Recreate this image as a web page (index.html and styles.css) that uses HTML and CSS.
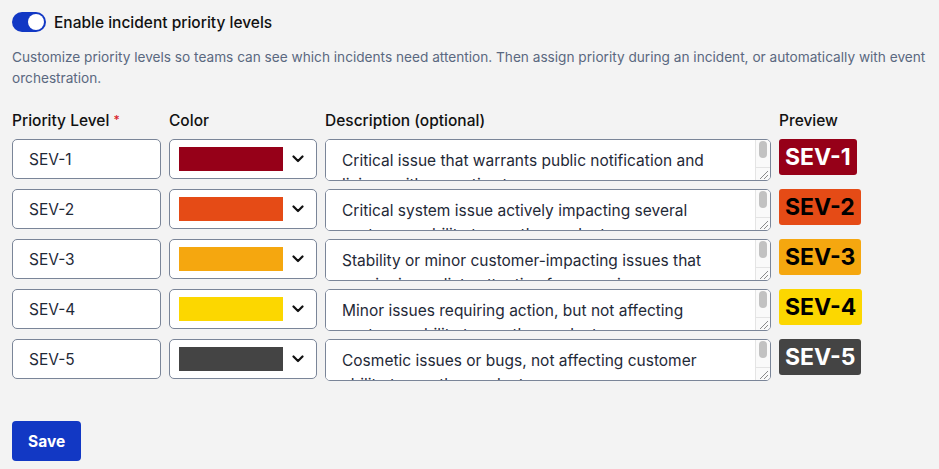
FILE: index.html
```html
<!DOCTYPE html>
<html lang="en">

<head>
    <meta charset="UTF-8">
    <meta name="viewport" content="width=device-width, initial-scale=1.0">
    <title>Incident priority levels</title>
    <link rel="stylesheet" href="styles.css">
</head>

<body>

    <div class="priority">
        <label class="priority__toggle">
            <span class="switch"><span class="switch__knob"></span></span>
            <span class="priority__title">Enable incident priority levels</span>
        </label>
        <p class="priority__help">Customize priority levels so teams can see which incidents need attention. Then assign priority during an incident, or automatically with event orchestration.</p>

        <div class="levels">
            <div class="levels__head">Priority Level <span class="required">*</span></div>
            <div class="levels__head">Color</div>
            <div class="levels__head">Description (optional)</div>
            <div class="levels__head">Preview</div>

            <input class="field" type="text" value="SEV-1">
            <button class="color-select"><span class="swatch swatch--sev1"></span><svg class="chevron" viewBox="0 0 12 8"><path d="M1.5 1.5 6 6l4.5-4.5"/></svg></button>
            <div class="area">
                <textarea class="area__input">Critical issue that warrants public notification and liaison with executive teams</textarea>
                <div class="area__bar"><span class="area__thumb"></span><span class="area__grip"><svg viewBox="0 0 14 12"><path d="M4 11 12 3M8 11l4-4"/></svg></span></div>
            </div>
            <div><span class="badge badge--sev1">SEV-1</span></div>

            <input class="field" type="text" value="SEV-2">
            <button class="color-select"><span class="swatch swatch--sev2"></span><svg class="chevron" viewBox="0 0 12 8"><path d="M1.5 1.5 6 6l4.5-4.5"/></svg></button>
            <div class="area">
                <textarea class="area__input">Critical system issue actively impacting several customers ability to use the product</textarea>
                <div class="area__bar"><span class="area__thumb"></span><span class="area__grip"><svg viewBox="0 0 14 12"><path d="M4 11 12 3M8 11l4-4"/></svg></span></div>
            </div>
            <div><span class="badge badge--sev2">SEV-2</span></div>

            <input class="field" type="text" value="SEV-3">
            <button class="color-select"><span class="swatch swatch--sev3"></span><svg class="chevron" viewBox="0 0 12 8"><path d="M1.5 1.5 6 6l4.5-4.5"/></svg></button>
            <div class="area">
                <textarea class="area__input">Stability or minor customer-impacting issues that require immediate attention from service owners</textarea>
                <div class="area__bar"><span class="area__thumb"></span><span class="area__grip"><svg viewBox="0 0 14 12"><path d="M4 11 12 3M8 11l4-4"/></svg></span></div>
            </div>
            <div><span class="badge badge--sev3">SEV-3</span></div>

            <input class="field" type="text" value="SEV-4">
            <button class="color-select"><span class="swatch swatch--sev4"></span><svg class="chevron" viewBox="0 0 12 8"><path d="M1.5 1.5 6 6l4.5-4.5"/></svg></button>
            <div class="area">
                <textarea class="area__input">Minor issues requiring action, but not affecting customer ability to use the product</textarea>
                <div class="area__bar"><span class="area__thumb"></span><span class="area__grip"><svg viewBox="0 0 14 12"><path d="M4 11 12 3M8 11l4-4"/></svg></span></div>
            </div>
            <div><span class="badge badge--sev4">SEV-4</span></div>

            <input class="field" type="text" value="SEV-5">
            <button class="color-select"><span class="swatch swatch--sev5"></span><svg class="chevron" viewBox="0 0 12 8"><path d="M1.5 1.5 6 6l4.5-4.5"/></svg></button>
            <div class="area">
                <textarea class="area__input">Cosmetic issues or bugs, not affecting customer ability to use the product</textarea>
                <div class="area__bar"><span class="area__thumb"></span><span class="area__grip"><svg viewBox="0 0 14 12"><path d="M4 11 12 3M8 11l4-4"/></svg></span></div>
            </div>
            <div><span class="badge badge--sev5">SEV-5</span></div>
        </div>

        <button class="save">Save</button>
    </div>

</body>

</html>
```

FILE: styles.css
```css
html {
    box-sizing: border-box;
    background: #f3f3f3;
}

*,
*:before,
*:after {
    box-sizing: inherit;
}

body {
    margin: 0;
    font-family: Inter, 'Noto Sans', sans-serif;
    color: #111;
}

.priority {
    padding: 12px 12px 8px;
}

.priority__toggle {
    display: flex;
    align-items: center;
    gap: 8px;
    height: 20px;
}

.switch {
    display: flex;
    justify-content: flex-end;
    align-items: center;
    width: 34px;
    height: 20px;
    padding: 2px;
    border-radius: 10px;
    background: #1238c4;
}

.switch__knob {
    width: 16px;
    height: 16px;
    border-radius: 50%;
    background: white;
}

.priority__title {
    font-size: 15.5px;
    font-weight: 500;
    line-height: 22px;
    margin-top: 2px;
}

.priority__help {
    margin: 15px 0 0;
    font-size: 13.65px;
    line-height: 21px;
    color: #5a6880;
}

.levels {
    display: grid;
    grid-template-columns: 149px 148px 446px auto;
    column-gap: 8px;
    row-gap: 8px;
    margin-top: 21px;
    align-items: start;
}

.levels__head {
    font-size: 15.5px;
    font-weight: 500;
    line-height: 21px;
}

.required {
    color: #d91c2b;
    font-size: 12px;
    vertical-align: top;
    position: relative;
    top: -1px;
}

.field {
    height: 40px;
    width: 100%;
    border: 1px solid #7a8598;
    border-radius: 5px;
    background: white;
    font-family: Inter, 'Noto Sans', sans-serif;
    font-size: 15.5px;
    color: #1f2937;
    padding: 0 16px;
}

/* textarea with a drawn scrollbar, the browser hides the real one */
.area {
    display: flex;
    height: 42px;
    border: 1px solid #7a8598;
    border-radius: 5px;
    background: white;
    overflow: hidden;
}

.area__input {
    flex: 1;
    min-width: 0;
    border: 0;
    outline: 0;
    resize: none;
    overflow: hidden;
    padding: 9px 12px 0 16px;
    font-family: Inter, 'Noto Sans', sans-serif;
    font-size: 15.5px;
    line-height: 24px;
    color: #1f2937;
    background: white;
}

.area__bar {
    display: flex;
    flex-direction: column;
    justify-content: space-between;
    width: 15px;
    background: #fafafa;
    border-left: 1px solid #e4e4e4;
}

.area__thumb {
    width: 8px;
    height: 17px;
    margin: 1px 0 0 3px;
    border-radius: 4px;
    background: #c2c2c2;
}

.area__grip {
    display: flex;
    height: 13px;
    border-top: 1px solid #e4e4e4;
}

.area__grip svg {
    width: 14px;
    height: 12px;
    fill: none;
    stroke: #8a8a8a;
    stroke-width: 1;
}

.color-select {
    display: flex;
    align-items: center;
    gap: 9px;
    height: 40px;
    width: 100%;
    border: 1px solid #7a8598;
    border-radius: 5px;
    background: white;
    padding: 0 9px;
    cursor: pointer;
}

.swatch {
    width: 104px;
    height: 24px;
}

.chevron {
    width: 12px;
    height: 8px;
    fill: none;
    stroke: #111;
    stroke-width: 2.2;
    stroke-linecap: round;
    stroke-linejoin: round;
}

.swatch--sev1,
.badge--sev1 {
    background: #960018;
}

.swatch--sev2,
.badge--sev2 {
    background: #e54b16;
}

.swatch--sev3,
.badge--sev3 {
    background: #f5a70f;
}

.swatch--sev4,
.badge--sev4 {
    background: #fcd700;
}

.swatch--sev5,
.badge--sev5 {
    background: #444444;
}

.badge {
    display: inline-block;
    height: 36px;
    padding: 0 6px;
    border-radius: 3px;
    font-size: 23px;
    font-weight: 700;
    line-height: 36px;
    color: #000;
}

.badge--sev1,
.badge--sev5 {
    color: white;
}

.save {
    margin-top: 40px;
    height: 40px;
    padding: 0 16px;
    border: 0;
    border-radius: 4px;
    background: #1238c4;
    color: white;
    font-family: Inter, 'Noto Sans', sans-serif;
    font-size: 15.5px;
    font-weight: 700;
    cursor: pointer;
}
```
